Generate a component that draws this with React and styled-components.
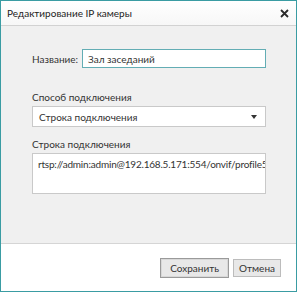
import React, { useState } from "react";
import styled, { createGlobalStyle } from "styled-components";

const GlobalStyle = createGlobalStyle`
	html, body {
		margin: 0;
		padding: 0;
		background: #ffffff;
	}
	body {
		font-family: Lato, "Liberation Sans", sans-serif;
		color: #333333;
	}
`;

const Window = styled.div`
	width: 297px;
	height: 292px;
	box-sizing: border-box;
	border: 1px solid #3a9ca3;
	display: flex;
	flex-direction: column;
	background: #f0f0f0;
	font-size: 10px;
`;

const TitleBar = styled.div`
	height: 24px;
	flex: none;
	display: flex;
	align-items: center;
	justify-content: space-between;
	padding: 0 7px 0 6px;
	background: linear-gradient(#ffffff, #f7f7f7);
	border-bottom: 1px solid #d2d2d2;
	h1 {
		margin: 0;
		font-size: 10px;
		font-weight: 400;
		color: #222222;
	}
`;

const CloseButton = styled.button`
	border: none;
	background: none;
	padding: 0;
	width: 10px;
	height: 10px;
	display: grid;
	place-items: center;
	cursor: pointer;
`;

const Body = styled.div`
	flex: 1;
	padding: 23px 30px 0 31px;
	display: flex;
	flex-direction: column;
`;

const InlineField = styled.div`
	display: flex;
	align-items: center;
	gap: 4px;
	margin-bottom: ${(p) => p.$after || 0}px;
	label {
		white-space: nowrap;
	}
`;

const StackField = styled.div`
	display: flex;
	flex-direction: column;
	gap: 1px;
	margin-bottom: ${(p) => p.$after || 0}px;
	label {
		line-height: 15px;
	}
`;

const TextInput = styled.input`
	flex: 1;
	height: 19px;
	box-sizing: border-box;
	border: 1px solid #63adb4;
	background: #ffffff;
	padding: 0 5px;
	font: inherit;
	color: #333333;
	outline: none;
`;

const Select = styled.div`
	height: 21px;
	box-sizing: border-box;
	border: 1px solid #c9c9c9;
	background: #ffffff;
	display: flex;
	align-items: center;
	justify-content: space-between;
	padding: 0 8px 0 6px;
`;

const TextArea = styled.textarea`
	height: 41px;
	box-sizing: border-box;
	border: 1px solid #c9c9c9;
	background: #ffffff;
	padding: 4px 5px;
	font: inherit;
	letter-spacing: -0.2px;
	color: #333333;
	resize: none;
	overflow: hidden;
	outline: none;
	margin: 0;
`;

const Footer = styled.div`
	height: 48px;
	flex: none;
	box-sizing: border-box;
	border-top: 1px solid #d5d5d5;
	background: #ffffff;
	display: flex;
	justify-content: flex-end;
	align-items: center;
	gap: 4px;
	padding: 0 15px 0 0;
`;

const Button = styled.button`
	font: inherit;
	color: #333333;
	height: ${(p) => (p.$primary ? 20 : 18)}px;
	padding: 0 ${(p) => (p.$primary ? 9 : 5)}px;
	box-sizing: border-box;
	background: #e8e8e8;
	border: 1px solid ${(p) => (p.$primary ? "#9a9a9a" : "#bcbcbc")};
	box-shadow: ${(p) => (p.$primary ? "inset 0 0 0 1px #d8d8d8" : "none")};
	cursor: pointer;
`;

const CloseIcon = () => (
	<svg width="9" height="9" viewBox="0 0 9 9">
		<path d="M1 1 L8 8 M8 1 L1 8" stroke="#2a2a2a" strokeWidth="1.8" />
	</svg>
);

const Caret = () => (
	<svg width="6" height="4" viewBox="0 0 6 4">
		<path d="M0 0 H6 L3 4 Z" fill="#333333" />
	</svg>
);

export default function App() {
	const [name, setName] = useState("Зал заседаний");
	const [url, setUrl] = useState("rtsp://admin:admin@192.168.5.171:554/onvif/profile5/media.smp");

	return (
		<>
			<GlobalStyle />
			<Window>
				<TitleBar>
					<h1>Редактирование IP камеры</h1>
					<CloseButton aria-label="close">
						<CloseIcon />
					</CloseButton>
				</TitleBar>
				<Body>
					<InlineField $after={22}>
						<label>Название:</label>
						<TextInput value={name} onChange={(evt) => setName(evt.target.value)} />
					</InlineField>
					<StackField $after={10}>
						<label>Способ подключения</label>
						<Select>
							<span>Строка подключения</span>
							<Caret />
						</Select>
					</StackField>
					<StackField>
						<label>Строка подключения</label>
						<TextArea wrap="off" value={url} onChange={(evt) => setUrl(evt.target.value)} />
					</StackField>
				</Body>
				<Footer>
					<Button $primary>Сохранить</Button>
					<Button>Отмена</Button>
				</Footer>
			</Window>
		</>
	);
}
